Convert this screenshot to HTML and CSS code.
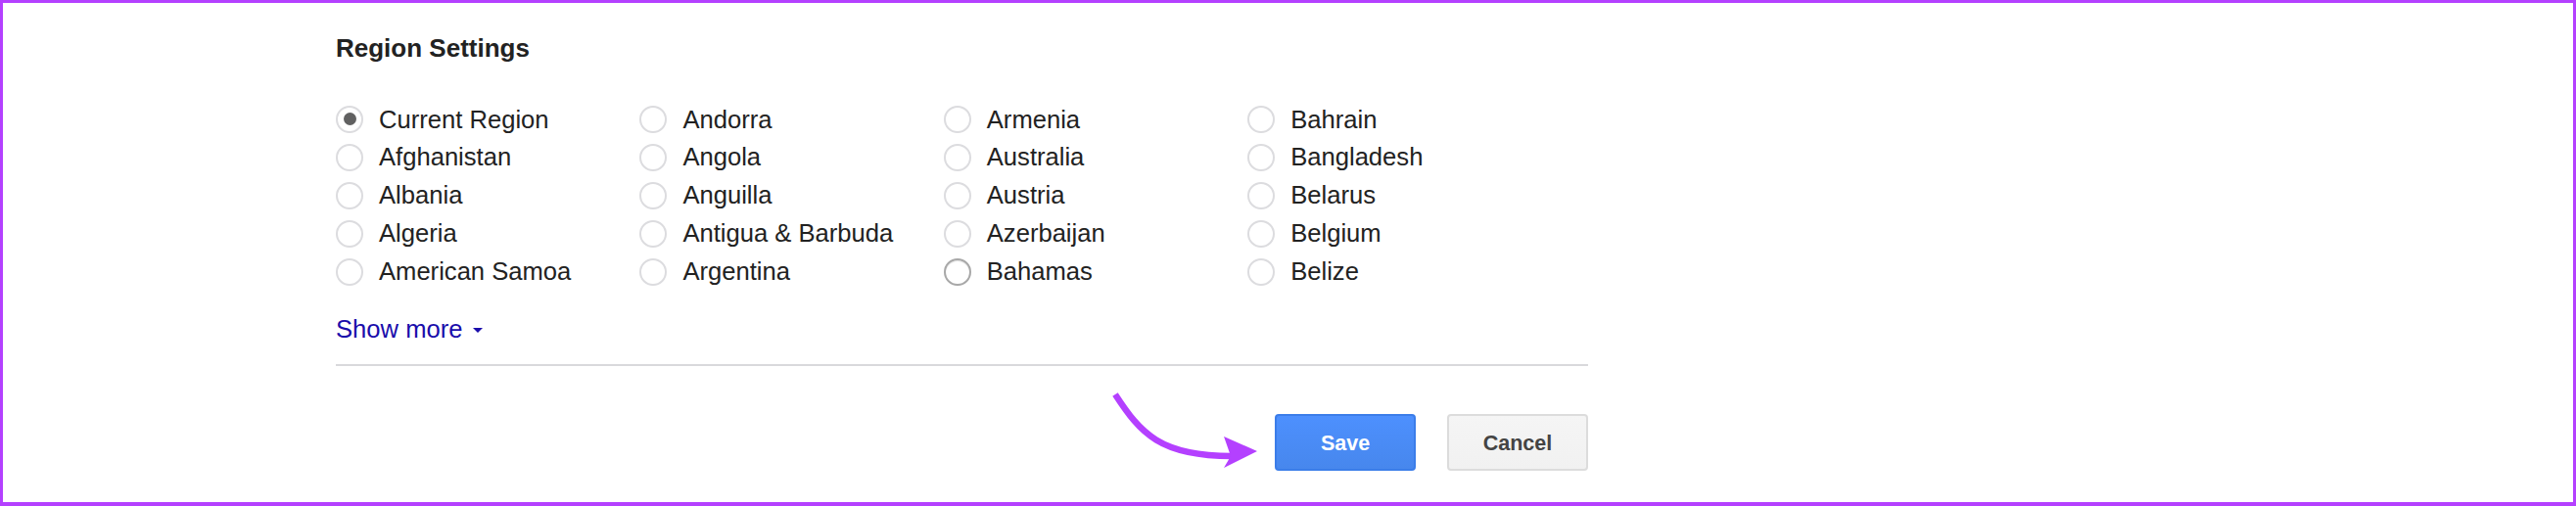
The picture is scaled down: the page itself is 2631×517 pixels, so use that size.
FILE: index.html
```html
<!DOCTYPE html>
<html lang="en">
<head>
<meta charset="utf-8">
<title>Region Settings</title>
<link rel="stylesheet" href="styles.css">
</head>
<body>
<div class="frame">
  <div class="panel">
    <h2 class="title">Region Settings</h2>
    <div class="regions">
      <label class="opt"><span class="radio checked"></span><span class="lbl">Current Region</span></label>
      <label class="opt"><span class="radio"></span><span class="lbl">Afghanistan</span></label>
      <label class="opt"><span class="radio"></span><span class="lbl">Albania</span></label>
      <label class="opt"><span class="radio"></span><span class="lbl">Algeria</span></label>
      <label class="opt"><span class="radio"></span><span class="lbl">American Samoa</span></label>
      <label class="opt"><span class="radio"></span><span class="lbl">Andorra</span></label>
      <label class="opt"><span class="radio"></span><span class="lbl">Angola</span></label>
      <label class="opt"><span class="radio"></span><span class="lbl">Anguilla</span></label>
      <label class="opt"><span class="radio"></span><span class="lbl">Antigua &amp; Barbuda</span></label>
      <label class="opt"><span class="radio"></span><span class="lbl">Argentina</span></label>
      <label class="opt"><span class="radio"></span><span class="lbl">Armenia</span></label>
      <label class="opt"><span class="radio"></span><span class="lbl">Australia</span></label>
      <label class="opt"><span class="radio"></span><span class="lbl">Austria</span></label>
      <label class="opt"><span class="radio"></span><span class="lbl">Azerbaijan</span></label>
      <label class="opt"><span class="radio hover"></span><span class="lbl">Bahamas</span></label>
      <label class="opt"><span class="radio"></span><span class="lbl">Bahrain</span></label>
      <label class="opt"><span class="radio"></span><span class="lbl">Bangladesh</span></label>
      <label class="opt"><span class="radio"></span><span class="lbl">Belarus</span></label>
      <label class="opt"><span class="radio"></span><span class="lbl">Belgium</span></label>
      <label class="opt"><span class="radio"></span><span class="lbl">Belize</span></label>
    </div>
    <a class="more" href="#">Show more<span class="caret"></span></a>
    <div class="divider"></div>
    <div class="actions">
      <button class="btn save" type="button">Save</button>
      <button class="btn cancel" type="button">Cancel</button>
    </div>
  </div>
  <svg class="arrow" width="2631" height="517" viewBox="0 0 2631 517" aria-hidden="true">
    <path d="M1139 403 C1165 443 1185 466 1258 466" fill="none" stroke="#b440ff" stroke-width="6.5"/>
    <path d="M1250 446 L1284 461 L1250 478 L1257 466 Z" fill="#b440ff"/>
  </svg>
</div>
</body>
</html>
```

FILE: styles.css
```css
html, body {
  margin: 0;
  padding: 0;
  background: #ffffff;
}

.frame {
  position: relative;
  width: 2631px;
  height: 517px;
  box-sizing: border-box;
  border: 3px solid #b440ff;
  border-bottom-width: 4px;
  background: #ffffff;
  font-family: "Liberation Sans", Arial, Helvetica, sans-serif;
  color: #222222;
  overflow: hidden;
}

.panel {
  margin-left: 340px;
  width: 1279px;
  display: flex;
  flex-direction: column;
}

.title {
  margin: 31px 0 0 0;
  font-size: 26px;
  line-height: 30px;
  font-weight: bold;
  color: #222222;
}

.regions {
  margin-top: 38.5px;
  display: grid;
  grid-auto-flow: column;
  grid-template-rows: repeat(5, 38.9px);
  grid-template-columns: repeat(4, 310.4px);
}

.opt {
  display: flex;
  align-items: center;
  font-size: 25.6px;
  line-height: 38.9px;
  white-space: nowrap;
}

.radio {
  width: 28px;
  height: 28px;
  box-sizing: border-box;
  border: 2px solid #dcdcdf;
  border-radius: 50%;
  display: flex;
  align-items: center;
  justify-content: center;
  flex: none;
  margin-right: 16px;
  background: #ffffff;
}

.radio.checked::after {
  content: "";
  width: 13px;
  height: 13px;
  border-radius: 50%;
  background: #616161;
}

.radio.hover {
  border-color: #a8a8a8;
  box-shadow: inset 0 1px 1px rgba(0, 0, 0, 0.12);
}

.more {
  margin-top: 24px;
  align-self: flex-start;
  display: flex;
  align-items: center;
  font-size: 25.6px;
  line-height: 30px;
  color: #1a0dab;
  text-decoration: none;
}

.caret {
  width: 0;
  height: 0;
  margin-left: 11px;
  margin-top: 3px;
  border-left: 5px solid transparent;
  border-right: 5px solid transparent;
  border-top: 5px solid #1a0dab;
}

.divider {
  margin-top: 21.5px;
  height: 2px;
  background: #d9d9dc;
}

.actions {
  margin-top: 49px;
  display: flex;
  justify-content: flex-end;
  gap: 32px;
}

.btn {
  width: 144px;
  height: 58px;
  box-sizing: border-box;
  border-radius: 4px;
  font-family: "Liberation Sans", Arial, Helvetica, sans-serif;
  font-size: 21.5px;
  font-weight: bold;
  padding: 2px 0 0 0;
}

.save {
  border: 2px solid #3b7de9;
  background: linear-gradient(#4d90fe, #4787ed);
  color: #ffffff;
}

.cancel {
  border: 2px solid #dcdcdc;
  background: linear-gradient(#f5f5f5, #f1f1f1);
  color: #444444;
}

.arrow {
  position: absolute;
  left: -3px;
  top: -3px;
  pointer-events: none;
}
```
